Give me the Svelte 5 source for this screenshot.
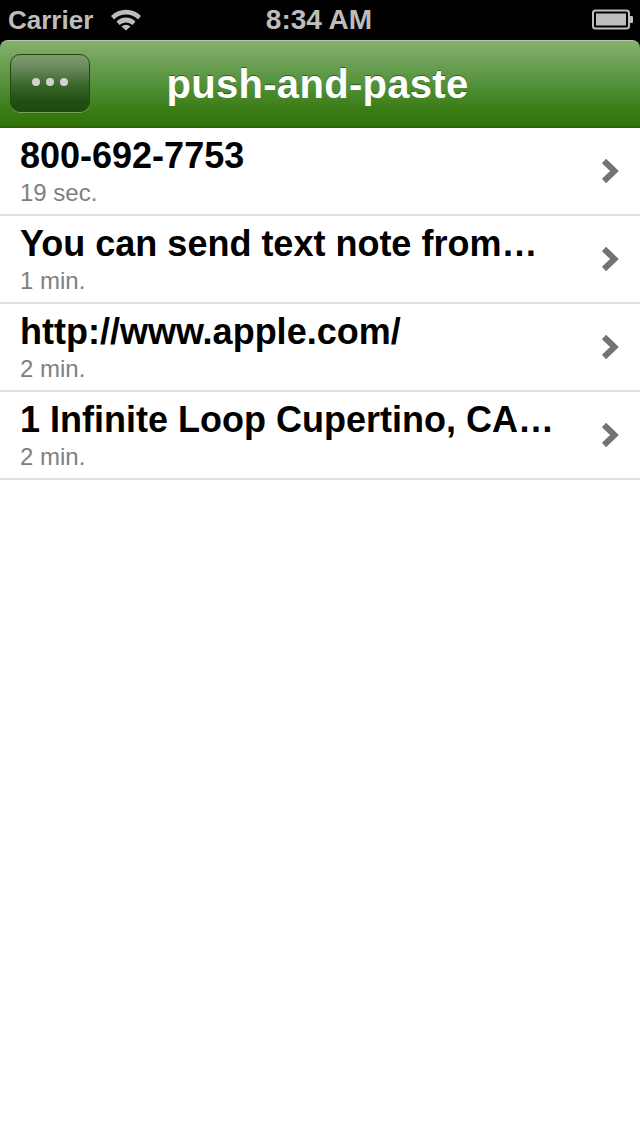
<script>
  const notes = [
    { title: '800-692-7753', age: '19 sec.' },
    { title: 'You can send text note from…', age: '1 min.' },
    { title: 'http://www.apple.com/', age: '2 min.' },
    { title: '1 Infinite Loop Cupertino, CA…', age: '2 min.' }
  ]
</script>

<div class="screen">
  <div class="status">
    <div class="status-left">
      <span class="carrier">Carrier</span>
      <svg class="wifi" width="32" height="23" viewBox="0 0 32 23">
        <path d="M1 8 A21 21 0 0 1 31 8 L28 11.5 A17 17 0 0 0 4 11.5 Z" fill="#bdbdbd" />
        <path d="M6.5 13.5 A13.5 13.5 0 0 1 25.5 13.5 L22.5 17 A9.5 9.5 0 0 0 9.5 17 Z" fill="#bdbdbd" />
        <path d="M11.5 18.5 A6.5 6.5 0 0 1 20.5 18.5 L16 22.5 Z" fill="#bdbdbd" />
      </svg>
    </div>
    <span class="clock">8:34 AM</span>
    <svg class="battery" width="42" height="22" viewBox="0 0 42 22">
      <rect x="1" y="1.5" width="36" height="18" rx="2.5" fill="none" stroke="#bdbdbd" stroke-width="2" />
      <rect x="4" y="4.5" width="30" height="12" fill="#bdbdbd" />
      <path d="M38 7 h2 a1 1 0 0 1 1 1 v5 a1 1 0 0 1 -1 1 h-2 Z" fill="#bdbdbd" />
    </svg>
  </div>

  <header class="nav">
    <button class="menu" type="button" aria-label="Menu">
      <span></span><span></span><span></span>
    </button>
    <h1>push-and-paste</h1>
  </header>

  <ul class="list">
    {#each notes as note}
      <li class="row">
        <div class="text">
          <div class="title">{note.title}</div>
          <div class="age">{note.age}</div>
        </div>
        <svg class="chevron" width="20" height="28" viewBox="0 0 20 28">
          <path d="M4 4 L14.5 14 L4 24" fill="none" stroke="#737373" stroke-width="6" />
        </svg>
      </li>
    {/each}
  </ul>
</div>

<style>
  :global(body) {
    margin: 0;
    background: #fff;
  }

  .screen {
    width: 640px;
    height: 1136px;
    background: #000;
    font-family: "Liberation Sans", Arial, sans-serif;
    overflow: hidden;
  }

  .status {
    height: 40px;
    display: grid;
    grid-template-columns: 1fr auto 1fr;
    align-items: center;
    padding: 0 10px 0 8px;
    color: #bdbdbd;
    font-size: 28px;
    font-weight: 700;
  }

  .status-left {
    display: flex;
    align-items: center;
    gap: 17px;
  }

  .carrier {
    font-size: 26px;
  }

  .wifi {
    margin-top: -2px;
  }

  .battery {
    justify-self: end;
    margin-right: -4px;
  }

  .nav {
    height: 88px;
    box-sizing: border-box;
    display: flex;
    align-items: center;
    justify-content: center;
    position: relative;
    border-radius: 8px 8px 0 0;
    border-top: 1px solid #b4d0a4;
    border-bottom: 2px solid #2a6204;
    background: linear-gradient(#87b06e, #6fa258 23%, #52913a 51%, #3a7c14 81%, #2f7308);
  }

  .menu {
    position: absolute;
    left: 10px;
    top: 13px;
    width: 80px;
    height: 58px;
    padding: 0;
    display: flex;
    align-items: center;
    justify-content: center;
    gap: 6px;
    border: 1px solid #25480f;
    border-radius: 10px;
    background: linear-gradient(#7f9b71, #6a8a5c 22%, #3f6b30 50%, #245013 80%, #1f4a0d);
    box-shadow: 0 1px 0 rgba(255, 255, 255, 0.3);
  }

  .menu span {
    width: 8px;
    height: 8px;
    margin-top: -2px;
    border-radius: 50%;
    background: #d2d2d2;
  }

  h1 {
    margin: 2px 5px 0 0;
    color: #fff;
    font-size: 40px;
    font-weight: 700;
    letter-spacing: 0.3px;
    text-shadow: 0 -1px 0 rgba(0, 0, 0, 0.4);
  }

  .list {
    margin: 0;
    padding: 0;
    list-style: none;
    height: 1008px;
    background: #fff;
  }

  .row {
    height: 88px;
    box-sizing: border-box;
    display: flex;
    align-items: center;
    justify-content: space-between;
    padding: 0 20px;
    border-bottom: 2px solid #e0e0e0;
  }

  .text {
    padding-bottom: 5px;
  }

  .title {
    font-size: 36px;
    font-weight: 700;
    line-height: 50px;
    color: #000;
    white-space: nowrap;
  }

  .age {
    font-size: 24px;
    line-height: 26px;
    margin-top: -1px;
    color: #808080;
  }

  .chevron {
    flex: none;
  }
</style>
